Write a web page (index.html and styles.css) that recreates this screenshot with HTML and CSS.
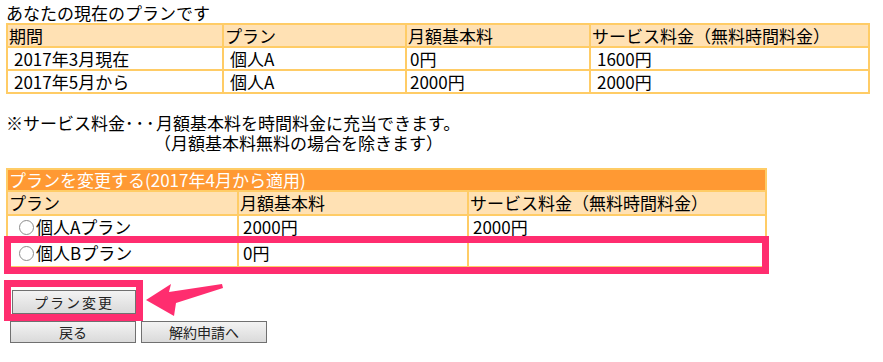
FILE: index.html
```html
<!DOCTYPE html>
<html lang="ja">
	<head>
		<meta charset="UTF-8">
		<title>プラン変更</title>
		<link rel="stylesheet" href="styles.css">
	</head>
	<body>
		<div class="ttl">あなたの現在のプランです</div>
		<table class="now">
			<colgroup><col class="n1"><col class="n2"><col class="n3"><col class="n4"></colgroup>
			<tr class="hd"><td>期間</td><td>プラン</td><td>月額基本料</td><td>サービス料金（無料時間料金）</td></tr>
			<tr><td class="sp">2017年3月現在</td><td class="sp">個人A</td><td class="sp2">0円</td><td class="sp">1600円</td></tr>
			<tr><td class="sp">2017年5月から</td><td class="sp">個人A</td><td class="sp2">2000円</td><td class="sp">2000円</td></tr>
		</table>

		<div class="note">
			<div>※サービス料金<span class="dots">･･･</span>月額基本料を時間料金に充当できます。</div>
			<div class="note2">（月額基本料無料の場合を除きます）</div>
		</div>

		<div class="chg">
			<table class="plan">
				<colgroup><col class="p1"><col class="p2"><col class="p3"></colgroup>
				<tr class="cap"><td colspan="3">プランを変更する(2017年4月から適用)</td></tr>
				<tr class="hd"><td>プラン</td><td>月額基本料</td><td>サービス料金（無料時間料金）</td></tr>
				<tr><td><label><input type="radio" name="plan">個人Aプラン</label></td><td class="sp">2000円</td><td class="sp">2000円</td></tr>
				<tr class="last"><td><label><input type="radio" name="plan">個人Bプラン</label></td><td class="sp">0円</td><td class="sp"></td></tr>
			</table>
			<!-- 注釈の枠 -->
			<div class="mark"></div>
		</div>

		<div class="btns">
			<div class="mark2"><button class="go">プラン変更</button></div>
			<svg class="arrow" width="80" height="36" viewBox="0 0 80 36">
				<polygon points="0,18 25,2 23,10 76,2 77,6 30,21 28,34" fill="#ff2d6f"/>
			</svg>
			<div class="row2">
				<button>戻る</button><button>解約申請へ</button>
			</div>
		</div>
	</body>
</html>
```

FILE: styles.css
```css
*{
	margin: 0;
	padding: 0;
	box-sizing: border-box;
}
body{
	padding: 3px 6px 0 6px;
	font-family: "Noto Sans CJK JP", "Liberation Sans", sans-serif;
	font-size: 17px;
	color: #000;
	background: #fff;
}
.ttl{
	line-height: 20px;
}
table{
	border-collapse: collapse;
	table-layout: fixed;
	border: 2px solid #ffcc66;
}
td{
	border: 2px solid #ffcc66;
	line-height: 21px;
	padding: 0 1px;
	white-space: nowrap;
	vertical-align: middle;
}
.hd td{
	background-color: #ffe1b4;
}
.sp{
	padding-left: 6px;
}
.sp2{
	padding-left: 3px;
}
.now{
	width: 862px;
}
.n1{width: 216px;}
.n2{width: 183px;}
.n3{width: 184px;}
.n4{width: 279px;}

.note{
	margin-top: 19px;
	line-height: 20px;
}
.dots{
	display: inline-block;
	width: 31px;
	text-align: center;
	letter-spacing: 2px;
}
.note2{
	padding-left: 148px;
}

.chg{
	position: relative;
	margin-top: 15px;
}
.plan{
	width: 759px;
}
.p1{width: 231px;}
.p2{width: 230px;}
.p3{width: 298px;}
.plan .cap td{
	background-color: #ff9933;
	color: #fff;
	line-height: 20px;
}
.plan td{
	line-height: 22px;
}
.plan .last td{
	line-height: 26px;
}
.plan .sp{
	padding-left: 4px;
}
label{
	display: flex;
	align-items: center;
}
input[type=radio]{
	appearance: none;
	-webkit-appearance: none;
	width: 15px;
	height: 15px;
	border: 1px solid #8c8c8c;
	border-radius: 50%;
	background: #fff;
	margin: 0 2px 0 10px;
}
.mark{
	position: absolute;
	left: -2px;
	top: 68px;
	width: 765px;
	height: 38px;
	border: 7px solid #ff2d6f;
}

.btns{
	position: relative;
	margin-top: 12px;
}
button{
	font-family: "Noto Sans CJK JP", "Liberation Sans", sans-serif;
	font-size: 14px;
	color: #222;
	width: 126px;
	height: 22px;
	border: 1px solid #707070;
	background: linear-gradient(#f3f3f3, #dadada);
	line-height: 20px;
}
.mark2{
	display: flex;
	width: fit-content;
	margin-left: -2px;
	border: 7px solid #ff2d6f;
	padding: 3px 0 0 1px;
}
.go{
	width: 124px;
	height: 24px;
	letter-spacing: 2px;
}
.row2{
	display: flex;
	gap: 5px;
	padding-left: 4px;
}
.arrow{
	position: absolute;
	left: 140px;
	top: 2px;
}
```
